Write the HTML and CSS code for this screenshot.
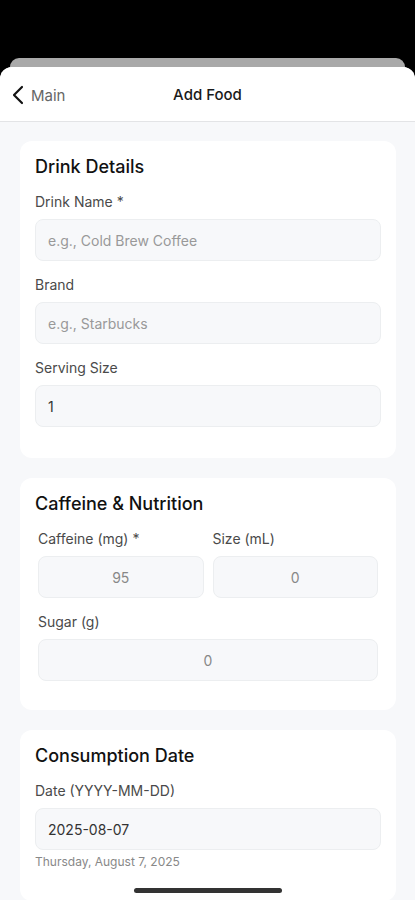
FILE: index.html
```html
<!DOCTYPE html>
<html lang="en">
<head>
    <meta charset="UTF-8">
    <meta name="viewport" content="width=device-width, initial-scale=1.0">
    <title>Add Food</title>
    <link rel="stylesheet" href="styles.css">
</head>
<body>
    <div class="status-area"></div>
    <div class="peek"></div>

    <div class="sheet">
        <header class="nav">
            <a class="back" href="#">
                <svg width="12" height="20" viewBox="0 0 12 20"><path d="M10 2 L2 10 L10 18" fill="none" stroke="#111" stroke-width="2.2" stroke-linecap="round" stroke-linejoin="round"/></svg>
                <span>Main</span>
            </a>
            <h1>Add Food</h1>
        </header>

        <main class="content">
            <section class="card">
                <h2>Drink Details</h2>
                <div class="field">
                    <label for="drinkName">Drink Name *</label>
                    <input type="text" id="drinkName" placeholder="e.g., Cold Brew Coffee">
                </div>
                <div class="field">
                    <label for="brand">Brand</label>
                    <input type="text" id="brand" placeholder="e.g., Starbucks">
                </div>
                <div class="field">
                    <label for="serving">Serving Size</label>
                    <input type="text" id="serving" value="1">
                </div>
            </section>

            <section class="card">
                <h2>Caffeine &amp; Nutrition</h2>
                <div class="nutrition">
                    <div class="row">
                        <div class="field">
                            <label for="caffeine">Caffeine (mg) *</label>
                            <input type="text" id="caffeine" class="num" value="95">
                        </div>
                        <div class="field">
                            <label for="size">Size (mL)</label>
                            <input type="text" id="size" class="num" value="0">
                        </div>
                    </div>
                    <div class="field">
                        <label for="sugar">Sugar (g)</label>
                        <input type="text" id="sugar" class="num" value="0">
                    </div>
                </div>
            </section>

            <section class="card">
                <h2>Consumption Date</h2>
                <div class="field">
                    <label for="date">Date (YYYY-MM-DD)</label>
                    <input type="text" id="date" value="2025-08-07">
                    <p class="hint">Thursday, August 7, 2025</p>
                </div>
            </section>
        </main>
    </div>

    <div class="home-bar"></div>
</body>
</html>
```

FILE: styles.css
```css
body {
    margin: 0;
    background: #000;
    font-family: Inter, "Noto Sans", sans-serif;
    height: 900px;
    overflow: hidden;
    position: relative;
}
.status-area {
    height: 58px;
}
.peek {
    height: 9px;
    margin: 0 10px;
    background: #a9a9a9;
    border-radius: 10px 10px 0 0;
}
.sheet {
    background: #f7f8fa;
    border-radius: 12px 12px 0 0;
    height: 833px;
    overflow: hidden;
}
.nav {
    position: relative;
    height: 54px;
    background: #fff;
    border-bottom: 1px solid #e3e4e6;
    display: flex;
    align-items: center;
    justify-content: center;
}
.back {
    position: absolute;
    left: 12px;
    top: 18px;
    display: flex;
    align-items: center;
    gap: 7px;
    color: #666;
    text-decoration: none;
    font-size: 15px;
}
.nav h1 {
    margin: 0;
    font-size: 15px;
    font-weight: 500;
    color: #1a1a1a;
}
.content {
    padding: 19px 19px 0 20px;
    display: flex;
    flex-direction: column;
    gap: 20px;
}
.card {
    background: #fff;
    border-radius: 12px;
    padding: 14px 15px 15px;
}
.card h2 {
    margin: 0 0 13px;
    font-size: 18px;
    line-height: 24px;
    font-weight: 500;
    color: #111;
}
.field {
    display: flex;
    flex-direction: column;
    margin-bottom: 14px;
}
.card > .field:last-child {
    margin-bottom: 16px;
}
label {
    font-size: 14px;
    line-height: 20px;
    color: #4a4a4a;
    margin-bottom: 7px;
}
input {
    box-sizing: border-box;
    height: 42px;
    width: 100%;
    padding: 0 12px;
    border: 1px solid #eceef0;
    border-radius: 8px;
    background: #f7f8fa;
    font-family: inherit;
    font-size: 14px;
    color: #333;
}
input::placeholder {
    color: #999;
}
input.num {
    text-align: center;
    color: #888;
}
.nutrition {
    padding: 0 3px;
}
.row {
    display: flex;
    gap: 9px;
}
.row .field {
    flex: 1;
    margin-bottom: 14px;
}
.nutrition > .field {
    margin-bottom: 14px;
}
.hint {
    margin: 4px 0 0;
    font-size: 12px;
    line-height: 16px;
    color: #888;
}
.home-bar {
    position: absolute;
    left: 134px;
    top: 888px;
    width: 148px;
    height: 5px;
    border-radius: 3px;
    background: #333;
}
```
